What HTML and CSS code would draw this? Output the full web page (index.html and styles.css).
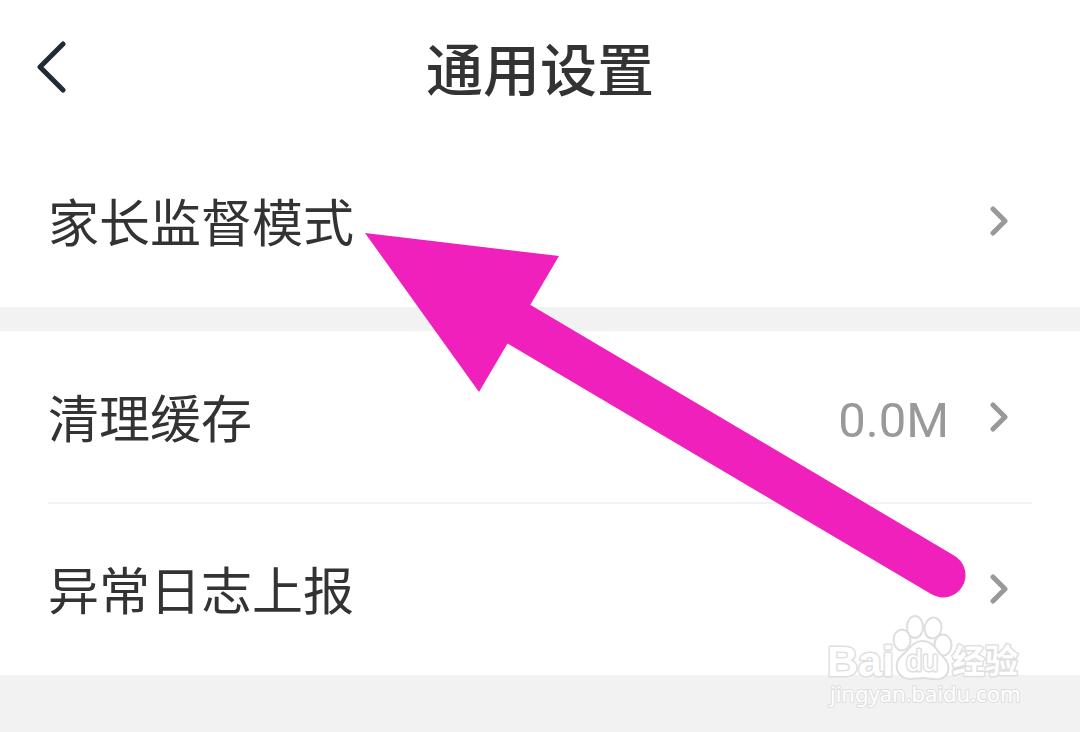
FILE: index.html
```html
<!DOCTYPE html>
<html lang="zh-CN">
<head>
    <meta charset="UTF-8">
    <meta name="viewport" content="width=device-width, initial-scale=1.0">
    <title>通用设置</title>
    <link rel="stylesheet" href="styles.css">
</head>
<body>
    <header class="header">
        <button type="button" class="back-button" aria-label="返回">
            <svg width="30" height="54" viewBox="0 0 30 54">
                <path d="M27 3L4 26L27 49"/>
            </svg>
        </button>
        <h1>通用设置</h1>
    </header>

    <main class="settings">
        <section class="group">
            <a href="#parent" class="row">
                <span class="label">家长监督模式</span>
                <svg class="chevron" width="18" height="30" viewBox="0 0 18 30">
                    <path d="M3 3L15 15L3 27"/>
                </svg>
            </a>
        </section>

        <section class="group">
            <a href="#cache" class="row">
                <span class="label">清理缓存</span>
                <span class="value">0.0M</span>
                <svg class="chevron" width="18" height="30" viewBox="0 0 18 30">
                    <path d="M3 3L15 15L3 27"/>
                </svg>
            </a>
            <a href="#log" class="row">
                <span class="label">异常日志上报</span>
                <svg class="chevron" width="18" height="30" viewBox="0 0 18 30">
                    <path d="M3 3L15 15L3 27"/>
                </svg>
            </a>
        </section>
    </main>

    <!-- 指示箭头 -->
    <svg class="arrow" width="602" height="366" viewBox="0 0 602 366">
        <path class="arrow-head" d="M0 0L194 23L114 159Z"/>
        <path class="arrow-line" d="M152 90L578 342"/>
    </svg>

    <!-- 水印 -->
    <svg class="watermark" width="200" height="100" viewBox="0 0 200 100">
        <text class="mark-latin" x="1" y="65">Bai</text>
        <g class="paw">
            <ellipse cx="76" cy="29" rx="7.500" ry="9.500"/>
            <ellipse cx="89" cy="16" rx="7" ry="10"/>
            <ellipse cx="107" cy="17" rx="7.500" ry="9.500" transform="rotate(10 107 17)"/>
            <ellipse cx="117" cy="34" rx="7.500" ry="9.500"/>
            <path d="M97 31C87 31 84 39 78 44C71 49 70 57 74 62C80 70 89 66 97 66C105 66 113 70 119 64C124 58 121 51 116 46C109 40 107 31 97 31Z"/>
        </g>
        <text class="mark-du" x="80" y="60">du</text>
        <text class="mark-cjk" x="126" y="62">经验</text>
        <text class="mark-url" x="4" y="91">jingyan.baidu.com</text>
    </svg>
</body>
</html>
```
FILE: styles.css
```css
* {
    box-sizing: border-box;
}
body {
    position: relative;
    margin: 0;
    min-height: 100vh;
    background: #f2f2f2;
    color: #333;
    font-family: Roboto, "Noto Sans CJK SC", sans-serif;
}
.header {
    display: grid;
    grid-template-columns: 80px 1fr 80px;
    align-items: center;
    height: 135px;
    background: #fff;
}
.header h1 {
    margin: 0;
    padding-top: 8px;
    font-size: 57px;
    line-height: 80px;
    font-weight: 500;
    text-align: center;
}
.back-button {
    display: flex;
    padding: 0 0 0 36px;
    border: none;
    background: none;
    cursor: pointer;
}
.back-button path {
    fill: none;
    stroke: #222a35;
    stroke-width: 5;
    stroke-linecap: round;
    stroke-linejoin: round;
}
.settings {
    display: flex;
    flex-direction: column;
    gap: 24px;
}
.group {
    padding: 0 48px;
    background: #fff;
}
.row {
    display: flex;
    align-items: center;
    height: 172px;
    padding-right: 24px;
    color: inherit;
    text-decoration: none;
}
.row + .row {
    box-shadow: 0 -1px 0 #f2f2f2, inset 0 1px 0 #f2f2f2;
}
.label {
    flex: 1;
    padding-top: 8px;
    font-size: 51px;
    line-height: 76px;
}
.value {
    margin-right: 41px;
    padding-top: 8px;
    color: #999;
    font-size: 49px;
    line-height: 76px;
}
.chevron path {
    fill: none;
    stroke: #999;
    stroke-width: 5;
    stroke-linecap: round;
    stroke-linejoin: round;
}
.arrow {
    position: absolute;
    top: 233px;
    left: 365px;
    pointer-events: none;
}
.arrow-head {
    fill: #ef20bb;
}
.arrow-line {
    fill: none;
    stroke: #ef20bb;
    stroke-width: 45;
    stroke-linecap: round;
}
.watermark {
    position: absolute;
    top: 611px;
    right: 54px;
    pointer-events: none;
}
.watermark text,
.paw {
    fill: #fff;
    stroke: #dedede;
    stroke-width: 3;
    stroke-linejoin: round;
    paint-order: stroke;
}
.watermark .paw {
    stroke-width: 4;
}
.watermark .mark-url {
    stroke-width: 2;
}
.mark-latin {
    font: bold 43px "Liberation Sans", sans-serif;
}
.mark-du {
    font: 29px "Liberation Sans", sans-serif;
}
.mark-cjk {
    font: bold 33px "Noto Sans CJK SC", sans-serif;
}
.mark-url {
    font: 22px "Noto Sans", sans-serif;
}
```
